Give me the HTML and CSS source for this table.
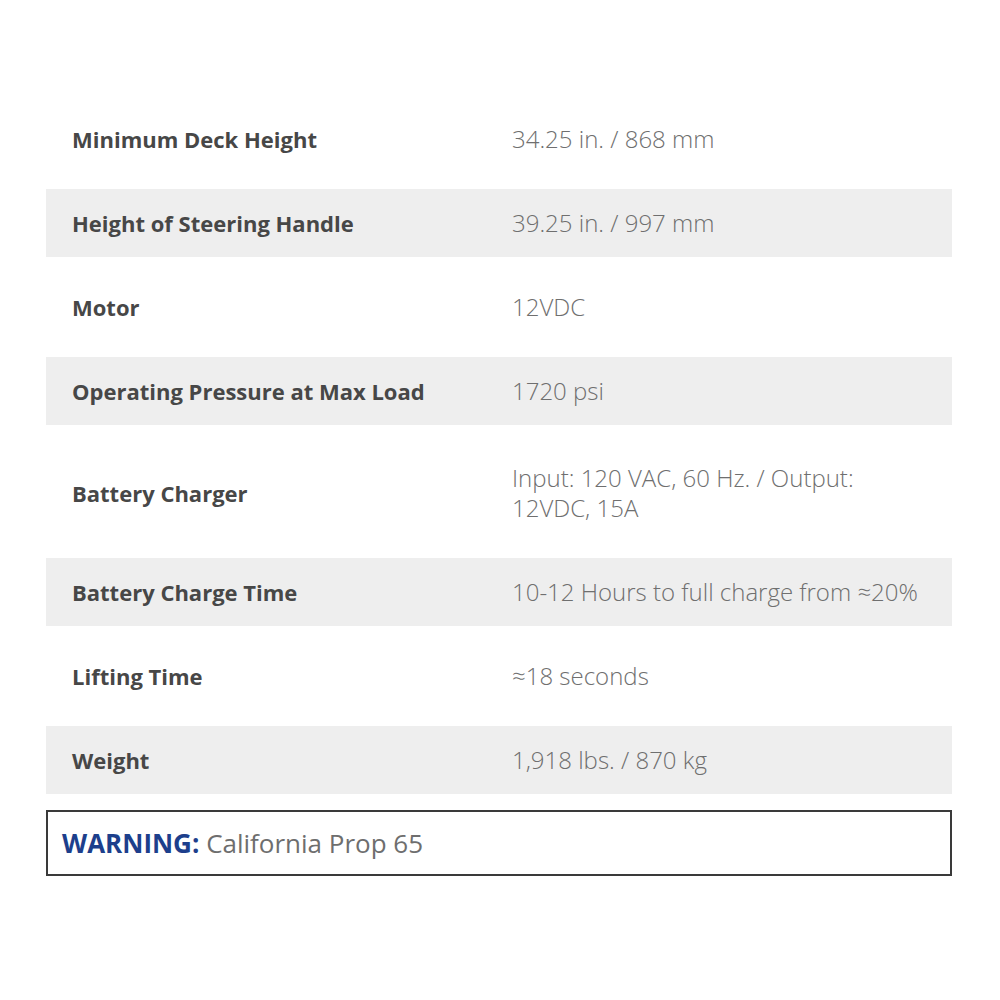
FILE: index.html
```html
<!DOCTYPE html>
<html lang="en">
<head>
    <meta charset="UTF-8">
    <meta name="viewport" content="width=device-width, initial-scale=1.0">
    <title>Specifications</title>
    <link rel="stylesheet" href="styles.css">
</head>
<body>

<div class="specs">
    <div class="spec-row">
        <div class="spec-label">Minimum Deck Height</div>
        <div class="spec-value">34.25 in. / 868 mm</div>
    </div>
    <div class="spec-row shaded">
        <div class="spec-label">Height of Steering Handle</div>
        <div class="spec-value">39.25 in. / 997 mm</div>
    </div>
    <div class="spec-row">
        <div class="spec-label">Motor</div>
        <div class="spec-value">12VDC</div>
    </div>
    <div class="spec-row shaded">
        <div class="spec-label">Operating Pressure at Max Load</div>
        <div class="spec-value">1720 psi</div>
    </div>
    <div class="spec-row tall">
        <div class="spec-label">Battery Charger</div>
        <div class="spec-value">Input: 120 VAC, 60 Hz. / Output:<br>12VDC, 15A</div>
    </div>
    <div class="spec-row shaded">
        <div class="spec-label">Battery Charge Time</div>
        <div class="spec-value">10-12 Hours to full charge from &asymp;20%</div>
    </div>
    <div class="spec-row">
        <div class="spec-label">Lifting Time</div>
        <div class="spec-value">&asymp;18 seconds</div>
    </div>
    <div class="spec-row shaded">
        <div class="spec-label">Weight</div>
        <div class="spec-value">1,918 lbs. / 870 kg</div>
    </div>

    <div class="warning">
        <strong>WARNING:</strong> California Prop 65
    </div>
</div>

</body>
</html>
```

FILE: styles.css
```css
body {
    font-family: "Open Sans", Arial, sans-serif;
    background-color: #ffffff;
    margin: 0;
    padding: 89px 48px 0 46px;
}
.specs {
    width: 906px;
}
.spec-row {
    display: grid;
    grid-template-columns: 440px 1fr;
    align-items: center;
    padding: 35px 0 35px 26px;
    line-height: 30px;
}
.spec-row.shaded {
    background-color: #eeeeee;
    padding-top: 19px;
    padding-bottom: 19px;
}
.spec-row.tall {
    padding-top: 38px;
    padding-bottom: 35px;
}
.spec-label {
    font-size: 22px;
    font-weight: bold;
    color: #474747;
}
.spec-value {
    font-size: 24px;
    font-weight: 300;
    color: #6f6f6f;
}
.warning {
    margin-top: 16px;
    border: 2px solid #3a3a3a;
    padding: 15px 14px;
    font-size: 26px;
    line-height: 32px;
    color: #6e6e6e;
}
.warning strong {
    color: #1d3f8c;
}
```
